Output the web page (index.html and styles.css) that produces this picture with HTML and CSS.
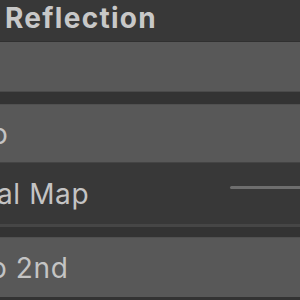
FILE: index.html
```html
<!DOCTYPE html>
<html>
<head>
<meta charset="utf-8">
<link rel="stylesheet" href="styles.css">
</head>
<body>
<div class="panel">
  <div class="header"><span class="title">Reflection</span></div>
  <div class="band band-empty"></div>
  <div class="gap"></div>
  <div class="band band-row"><span class="label label-o">o</span></div>
  <div class="row-dark">
    <span class="label label-map">al Map</span>
    <span class="slider"></span>
  </div>
  <div class="sep"></div>
  <div class="band band-last"><span class="label label-2nd">o 2nd</span></div>
  <div class="bottom"></div>
</div>
</body>
</html>
```
FILE: styles.css
```css
html, body {
  margin: 0;
  padding: 0;
  background: #383838;
  overflow: hidden;
}
.panel {
  width: 300px;
  height: 300px;
  display: flex;
  flex-direction: column;
  font-family: Inter, "Noto Sans", sans-serif;
  overflow: hidden;
}
.header {
  height: 41px;
  display: flex;
  align-items: center;
  background: #383838;
  border-bottom: 1px solid #303030;
}
.title {
  margin-left: 5px;
  font-size: 28px;
  font-weight: 700;
  letter-spacing: 1.3px;
  color: #c8c8c8;
  line-height: 1;
  margin-top: -6px;
}
.band {
  background: #585858;
  display: flex;
  align-items: center;
}
.band-empty {
  height: 49px;
  border-bottom: 1px solid #4a4a4a;
}
.gap {
  height: 12px;
  background: #333333;
}
.band-row {
  height: 57px;
  border-top: 1px solid #505050;
}
.label {
  font-size: 28px;
  letter-spacing: 0.6px;
  color: #c4c4c4;
  line-height: 1;
  white-space: nowrap;
}
.label-o {
  margin-left: -9px;
}
.row-dark {
  height: 61px;
  background: #383838;
  display: flex;
  align-items: center;
  border-top: 1px solid #444444;
}
.label-map {
  margin-left: -3px;
  flex: 1;
}
.slider {
  width: 70px;
  height: 3px;
  background: #6e6e6e;
  margin-top: -13px;
  border-radius: 2px 0 0 2px;
}
.sep {
  height: 13px;
  background: #333333;
  border-top: 3px solid #464646;
  box-sizing: border-box;
}
.band-last {
  height: 59px;
  border-top: 1px solid #505050;
}
.label-2nd {
  margin-left: -10px;
}
.bottom {
  flex: 1;
  background: #333333;
}
```
